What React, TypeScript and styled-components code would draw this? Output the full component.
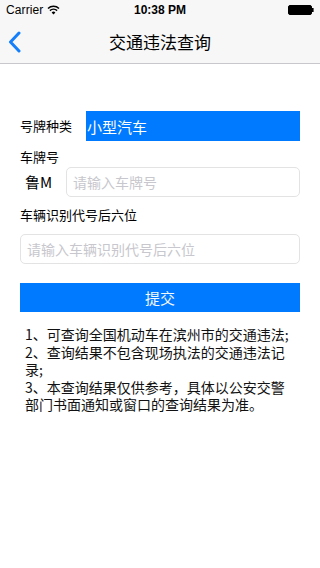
import React from "react";
import styled, { createGlobalStyle } from "styled-components";

const Global = createGlobalStyle`
  html, body { margin: 0; padding: 0; background: #ffffff; }
  body { font-family: "Liberation Sans", "Noto Sans CJK SC", sans-serif; color: #000; }
  * { box-sizing: border-box; }
`;

const Page = styled.div`
  width: 320px;
  height: 568px;
  background: #ffffff;
  display: flex;
  flex-direction: column;
`;

const Header = styled.header`
  background: #f7f7f7;
  border-bottom: 1px solid #c8c7cc;
  height: 64px;
  display: flex;
  flex-direction: column;
`;

const StatusBar = styled.div`
  height: 20px;
  display: grid;
  grid-template-columns: 1fr auto 1fr;
  align-items: center;
  padding: 0 6px;
  font-size: 12px;
`;

const StatusLeft = styled.div`
  display: flex;
  align-items: center;
  gap: 4px;
  letter-spacing: 0.1px;
`;

const Time = styled.div`
  font-weight: bold;
  font-size: 12px;
`;

const StatusRight = styled.div`
  display: flex;
  justify-content: flex-end;
  align-items: center;
`;

const NavBar = styled.div`
  height: 43px;
  display: grid;
  grid-template-columns: 60px 1fr 60px;
  align-items: center;
`;

const BackButton = styled.div`
  padding-left: 8px;
  display: flex;
  align-items: center;
  height: 100%;
`;

const Title = styled.h1`
  margin: 0;
  text-align: center;
  font-size: 17px;
  font-weight: normal;
  line-height: 20px;
  font-family: "Noto Sans CJK SC", sans-serif;
`;

const Form = styled.main`
  padding: 0 20px;
  display: flex;
  flex-direction: column;
`;

const Row = styled.div<{ $top: number }>`
  display: flex;
  align-items: center;
  height: 30px;
  margin-top: ${(p) => p.$top}px;
`;

const RowLabel = styled.div<{ $width: number; $size: number; $indent?: number }>`
  width: ${(p) => p.$width}px;
  padding-left: ${(p) => p.$indent ?? 0}px;
  font-size: ${(p) => p.$size}px;
  font-family: "Noto Sans CJK SC", sans-serif;
  line-height: 20px;
  flex-shrink: 0;
`;

const SelectBox = styled.div`
  flex: 1;
  height: 30px;
  background: #007aff;
  color: #ffffff;
  font-size: 15px;
  font-family: "Noto Sans CJK SC", sans-serif;
  display: flex;
  align-items: center;
  padding-left: 1px;
`;

const Label = styled.div<{ $top: number }>`
  margin-top: ${(p) => p.$top}px;
  font-size: 13px;
  line-height: 16px;
  font-family: "Noto Sans CJK SC", sans-serif;
`;

const Input = styled.input`
  flex: 1;
  width: 100%;
  height: 30px;
  border: 1px solid #e3e3e3;
  border-radius: 5px;
  padding: 0 6px;
  font-size: 14px;
  font-family: "Noto Sans CJK SC", sans-serif;
  background: #fff;
  outline: none;
  &::placeholder { color: #c7c7cd; }
`;

const FullInput = styled(Input)<{ $top: number }>`
  margin-top: ${(p) => p.$top}px;
  flex: none;
`;

const SubmitButton = styled.button`
  margin-top: 19px;
  height: 29px;
  width: 100%;
  border: none;
  background: #007aff;
  color: #f4f8ff;
  font-size: 15px;
  font-family: "Noto Sans CJK SC", sans-serif;
  padding: 0;
`;

const Notes = styled.div`
  margin-top: 14px;
  padding-left: 5px;
  width: 275px;
  display: flex;
  flex-direction: column;
`;

const Note = styled.p`
  margin: 0;
  font-size: 14px;
  line-height: 17.6px;
  font-family: "Noto Sans CJK SC", sans-serif;
  color: #111;
`;

const Wifi = () => (
  <svg width="13" height="10" viewBox="0 0 13 10">
    <path d="M6.5 9.5 L4.6 7.4 A2.8 2.8 0 0 1 8.4 7.4 Z" fill="#000" />
    <path d="M2.9 5.6 A5.2 5.2 0 0 1 10.1 5.6" stroke="#000" strokeWidth="1.5" fill="none" />
    <path d="M1 3.5 A7.8 7.8 0 0 1 12 3.5" stroke="#000" strokeWidth="1.5" fill="none" />
  </svg>
);

const Battery = () => (
  <svg width="26" height="10" viewBox="0 0 26 10">
    <rect x="0.5" y="0.5" width="23" height="9" rx="1.5" fill="#000" stroke="#000" />
    <rect x="24" y="3" width="1.6" height="4" fill="#000" />
  </svg>
);

const Chevron = () => (
  <svg width="14" height="22" viewBox="0 0 14 22">
    <path d="M11 2 L2.5 11 L11 20" stroke="#157efb" strokeWidth="3" fill="none" strokeLinecap="round" strokeLinejoin="round" />
  </svg>
);

const notes = [
  "1、可查询全国机动车在滨州市的交通违法;",
  "2、查询结果不包含现场执法的交通违法记录;",
  "3、本查询结果仅供参考，具体以公安交警部门书面通知或窗口的查询结果为准。",
];

export default function App() {
  return (
    <Page>
      <Global />
      <Header>
        <StatusBar>
          <StatusLeft>
            <span>Carrier</span>
            <Wifi />
          </StatusLeft>
          <Time>10:38 PM</Time>
          <StatusRight>
            <Battery />
          </StatusRight>
        </StatusBar>
        <NavBar>
          <BackButton>
            <Chevron />
          </BackButton>
          <Title>交通违法查询</Title>
          <div />
        </NavBar>
      </Header>
      <Form>
        <Row $top={47}>
          <RowLabel $width={66} $size={13}>号牌种类</RowLabel>
          <SelectBox>小型汽车</SelectBox>
        </Row>
        <Label $top={8}>车牌号</Label>
        <Row $top={2}>
          <RowLabel $width={46} $size={15} $indent={5}>鲁M</RowLabel>
          <Input placeholder="请输入车牌号" />
        </Row>
        <Label $top={10}>车辆识别代号后六位</Label>
        <FullInput $top={11} placeholder="请输入车辆识别代号后六位" />
        <SubmitButton>提交</SubmitButton>
        <Notes>
          {notes.map((n) => (
            <Note key={n}>{n}</Note>
          ))}
        </Notes>
      </Form>
    </Page>
  );
}
